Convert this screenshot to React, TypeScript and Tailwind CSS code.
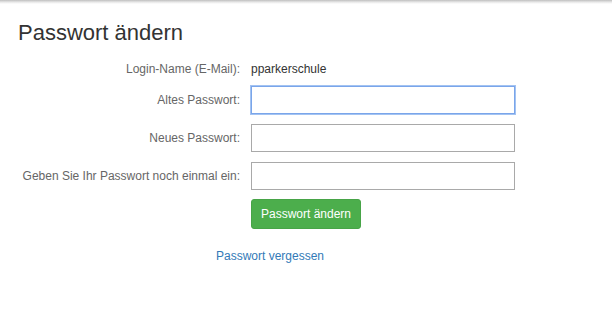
import React from "react";

export default function App() {
  return (
    <div className="w-[612px] h-[314px] bg-white font-['Liberation_Sans',Arial,sans-serif] overflow-hidden">
      <div className="h-[4px] bg-gradient-to-b from-[#bfbfbf] via-[#e6e6e6] to-white" />
      <div className="pl-[18px] pt-[16px]">
        <h1 className="text-[22px] leading-[26px] text-[#333] font-normal">Passwort ändern</h1>
        <div className="mt-[14px] flex flex-col text-[12px]">
          <div className="flex items-center h-[18px]">
            <div className="w-[222px] text-right text-[#666]">Login-Name (E-Mail):</div>
            <div className="ml-[11px] text-[#333]">pparkerschule</div>
          </div>
          <div className="flex items-center h-[28px] mt-[8px]">
            <label className="w-[222px] text-right text-[#666]">Altes Passwort:</label>
            <input
              type="password"
              className="ml-[11px] w-[264px] h-[28px] border border-[#7aa5ea] shadow-[0_0_0_1px_#a3c3f2] outline-none bg-white"
            />
          </div>
          <div className="flex items-center h-[28px] mt-[10px]">
            <label className="w-[222px] text-right text-[#666]">Neues Passwort:</label>
            <input
              type="password"
              className="ml-[11px] w-[264px] h-[28px] border border-[#a9a9a9] outline-none bg-white"
            />
          </div>
          <div className="flex items-center h-[28px] mt-[10px]">
            <label className="w-[222px] text-right text-[#666]">Geben Sie Ihr Passwort noch einmal ein:</label>
            <input
              type="password"
              className="ml-[11px] w-[264px] h-[28px] border border-[#a9a9a9] outline-none bg-white"
            />
          </div>
          <div className="flex mt-[9px]">
            <button className="ml-[233px] w-[110px] h-[30px] rounded-[3px] bg-[#4cae4c] border border-[#47a447] text-white text-[12px]">
              Passwort ändern
            </button>
          </div>
          <div className="mt-[19px] pl-[198px] leading-[16px]">
            <a href="#" className="text-[#337ab7]">Passwort vergessen</a>
          </div>
        </div>
      </div>
    </div>
  );
}
